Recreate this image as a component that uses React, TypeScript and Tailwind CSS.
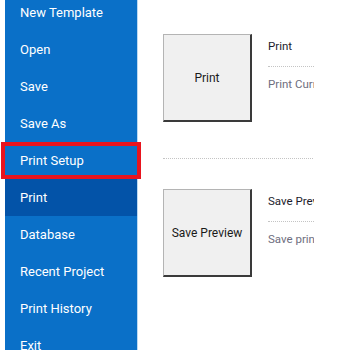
import React from "react";

const items = [
  "New Template",
  "Open",
  "Save",
  "Save As",
  "Print Setup",
  "Print",
  "Database",
  "Recent Project",
  "Print History",
  "Exit",
];

function Section({ btn, title, desc }: { btn: string; title: string; desc: string }) {
  return (
    <div className="flex items-start">
      <div className="w-[89px] h-[88px] bg-[#f0f0f0] border-t border-l border-t-[#b4b4b4] border-l-[#b4b4b4] border-r-2 border-b-2 border-r-[#3a3a3a] border-b-[#3a3a3a] flex items-center justify-center text-[12px] text-[#1a1a1a]">
        {btn}
      </div>
      <div className="ml-[16px] w-[46px] overflow-hidden whitespace-nowrap text-[11.5px]">
        <div className="h-[22px] mt-[1px] leading-[22px] text-[#1c1c2c]">{title}</div>
        <div className="mt-[9px] border-t border-dotted border-[#c4c4c4] w-[46px]" />
        <div className="mt-[6px] leading-[22px] text-[#6e6e7e]">{desc}</div>
      </div>
    </div>
  );
}

export default function App() {
  return (
    <div
      className="relative w-[352px] h-[356px] bg-white overflow-hidden flex"
      style={{ fontFamily: 'Roboto, "Noto Sans", sans-serif' }}
    >
      <div className="ml-[5px] w-[133px] h-[350px] bg-[#0a70c8] border-r border-[#bcd9f2] overflow-hidden">
        <div className="-mt-[6px] flex flex-col">
          {items.map((it, i) => (
            <div
              key={it}
              className={
                "h-[37px] flex items-center pl-[15px] text-[13px] text-white " +
                (i === 5 ? "bg-[#0353a8]" : "")
              }
            >
              {it}
            </div>
          ))}
        </div>
      </div>
      <div className="ml-[25px] pt-[34px] flex flex-col">
        <Section btn="Print" title="Print" desc="Print Current" />
        <div className="mt-[36px] w-[150px] border-t border-dotted border-[#c4c4c4]" />
        <div className="mt-[30px]">
          <Section btn="Save Preview" title="Save Preview" desc="Save print preview" />
        </div>
      </div>
      <div className="absolute left-[1px] top-[142px] w-[140px] h-[37px] border-[4px] border-[#e8141e]" />
    </div>
  );
}
